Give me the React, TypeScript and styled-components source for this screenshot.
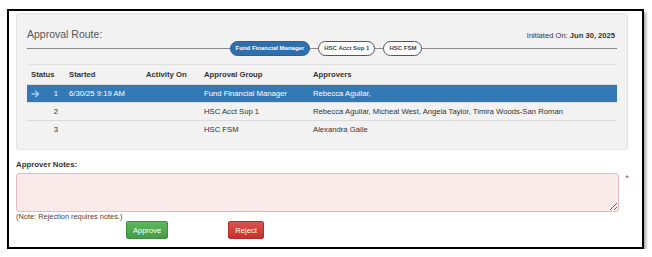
import React from 'react';
import styled, { createGlobalStyle } from 'styled-components';

const GlobalStyle = createGlobalStyle`
  html, body {
    margin: 0;
    padding: 0;
    background: #ffffff;
  }
  body {
    font-family: 'Liberation Sans', Arial, sans-serif;
    color: #333;
  }
`;

const Frame = styled.div`
  box-sizing: border-box;
  margin: 9px 0 0 7px;
  width: 637px;
  height: 240px;
  border: 2px solid #000;
  box-shadow: 2px 3px 3px rgba(0, 0, 0, 0.35);
  padding: 2px 13px 0 7px;
  background: #fff;
`;

const Panel = styled.div`
  box-sizing: border-box;
  width: 612px;
  height: 137px;
  background: #f2f2f2;
  border: 1px solid #e4e4e4;
  border-radius: 3px;
  padding: 14px 10px 0 10px;
`;

const HeaderRow = styled.div`
  display: flex;
  justify-content: space-between;
  align-items: baseline;
  padding-right: 2px;
`;

const RouteTitle = styled.div`
  font-size: 10.5px;
  color: #555;
`;

const Initiated = styled.div`
  font-size: 7.6px;
  color: #333;

  b {
    font-weight: bold;
  }
`;

const Route = styled.div`
  position: relative;
  display: flex;
  justify-content: center;
  align-items: center;
  height: 16px;
  padding-left: 8px;

  &::before {
    content: '';
    position: absolute;
    left: 0;
    right: 0;
    top: 50%;
    border-top: 1px solid #8a8a8a;
  }
`;

const Pill = styled.span<{ $active?: boolean }>`
  position: relative;
  display: inline-flex;
  align-items: center;
  height: 15px;
  box-sizing: border-box;
  padding: 0 5px;
  margin: 0 4px;
  border-radius: 8px;
  font-size: 6px;
  font-weight: bold;
  white-space: nowrap;
  background: ${(p) => (p.$active ? '#2f6fae' : '#ffffff')};
  color: ${(p) => (p.$active ? '#ffffff' : '#444')};
  border: 1px solid ${(p) => (p.$active ? '#2a5f96' : '#555')};
`;

const Table = styled.table`
  width: 590px;
  border-collapse: collapse;
  margin-top: 8px;
  font-size: 7.7px;
  color: #333;

  th {
    text-align: left;
    font-weight: bold;
    height: 19px;
    padding: 0 4px;
    border-top: 1px solid #e2e2e2;
  }

  td {
    height: 17px;
    padding: 0 4px;
    border-top: 1px solid #dcdcdc;
    white-space: nowrap;
  }
`;

const Row = styled.tr<{ $selected?: boolean }>`
  background: ${(p) => (p.$selected ? '#3279b6' : 'transparent')};
  color: ${(p) => (p.$selected ? '#ffffff' : '#333')};
`;

const StatusCell = styled.td`
  width: 30px;
`;

const StatusInner = styled.span`
  display: flex;
  align-items: center;
  justify-content: space-between;
  width: 27px;
`;

const NumCell = styled.span`
  margin-left: auto;
`;

const NotesLabel = styled.div`
  font-size: 7.8px;
  font-weight: bold;
  color: #333;
  margin-top: 10px;
`;

const NotesRow = styled.div`
  display: flex;
  align-items: flex-start;
  margin-top: 4px;
`;

const Notes = styled.textarea`
  box-sizing: border-box;
  width: 612px;
  height: 39px;
  background: #fbeaea;
  border: 1px solid #e4b9bd;
  border-radius: 3px;
  resize: vertical;
  margin: 0;
`;

const Required = styled.span`
  color: #c0394a;
  font-size: 9px;
  margin-left: 6px;
`;

const Hint = styled.div`
  font-size: 7.4px;
  color: #444;
`;

const Buttons = styled.div`
  display: flex;
  padding-left: 110px;
  gap: 60px;
`;

const Button = styled.button<{ $tone: 'green' | 'red' }>`
  height: 18px;
  padding: 0 6px;
  font-family: 'Liberation Sans', Arial, sans-serif;
  font-size: 7.6px;
  color: #fff;
  border-radius: 2px;
  border: 1px solid ${(p) => (p.$tone === 'green' ? '#3b8e3b' : '#b52b27')};
  background: ${(p) =>
    p.$tone === 'green'
      ? 'linear-gradient(#5cb85c, #449d44)'
      : 'linear-gradient(#d9534f, #c9302c)'};
`;

const Arrow = () => (
  <svg width="9" height="8" viewBox="0 0 9 8">
    <path d="M0.5 4 H7 M4.2 1 L7.5 4 L4.2 7" stroke="#a9c9ea" strokeWidth="1.6" fill="none" />
  </svg>
);

const steps = [
  {
    n: 1,
    started: '6/30/25 9:19 AM',
    group: 'Fund Financial Manager',
    approvers: 'Rebecca Aguilar,',
    selected: true,
  },
  {
    n: 2,
    started: '',
    group: 'HSC Acct Sup 1',
    approvers: 'Rebecca Aguilar, Micheal West, Angela Taylor, Timira Woods-San Roman',
  },
  { n: 3, started: '', group: 'HSC FSM', approvers: 'Alexandra Galle' },
];

export default function App() {
  return (
    <>
      <GlobalStyle />
      <Frame>
        <Panel>
          <HeaderRow>
            <RouteTitle>Approval Route:</RouteTitle>
            <Initiated>
              Initiated On: <b>Jun 30, 2025</b>
            </Initiated>
          </HeaderRow>
          <Route>
            <Pill $active>Fund Financial Manager</Pill>
            <Pill>HSC Acct Sup 1</Pill>
            <Pill>HSC FSM</Pill>
          </Route>
          <Table>
            <thead>
              <tr>
                <th style={{ width: 30 }}>Status</th>
                <th style={{ width: 69 }}>Started</th>
                <th style={{ width: 50 }}>Activity On</th>
                <th style={{ width: 101 }}>Approval Group</th>
                <th>Approvers</th>
              </tr>
            </thead>
            <tbody>
              {steps.map((s) => (
                <Row key={s.n} $selected={s.selected}>
                  <StatusCell>
                    <StatusInner>
                      {s.selected ? <Arrow /> : null}
                      <NumCell>{s.n}</NumCell>
                    </StatusInner>
                  </StatusCell>
                  <td>{s.started}</td>
                  <td></td>
                  <td>{s.group}</td>
                  <td>{s.approvers}</td>
                </Row>
              ))}
            </tbody>
          </Table>
        </Panel>
        <NotesLabel>Approver Notes:</NotesLabel>
        <NotesRow>
          <Notes />
          <Required>*</Required>
        </NotesRow>
        <Hint>(Note: Rejection requires notes.)</Hint>
        <Buttons>
          <Button $tone="green">Approve</Button>
          <Button $tone="red">Reject</Button>
        </Buttons>
      </Frame>
    </>
  );
}
